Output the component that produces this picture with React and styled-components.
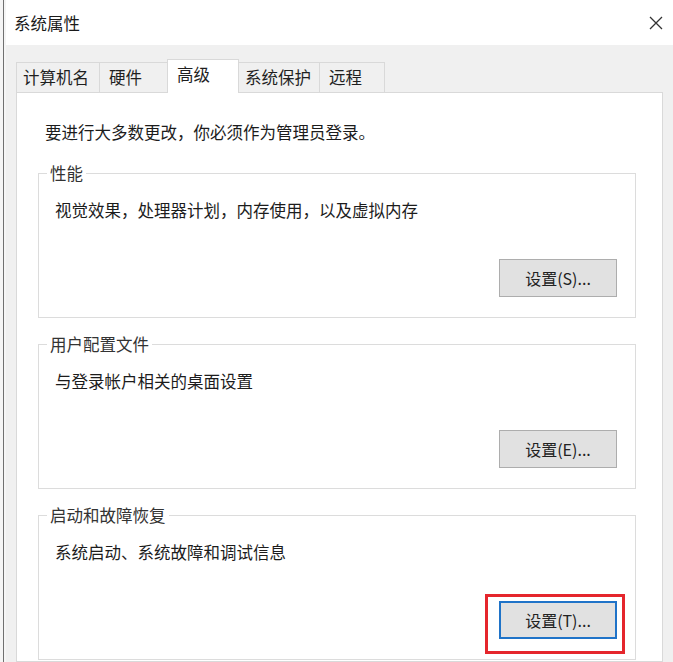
import styled, { createGlobalStyle } from 'styled-components';

const Global = createGlobalStyle`
  html, body { margin: 0; padding: 0; background: #f3f3f3; }
  body { font-family: "Noto Sans CJK SC", "Noto Sans", sans-serif; color: #1c1c1c; }
`;

const Page = styled.div`
  display: flex;
  height: 662px;
  overflow: hidden;
  background: #f5f5f5;
`;

const Edge = styled.div`
  width: 1px;
  margin: 0 2px 0 3px;
  background: #707070;
`;

const Window = styled.div`
  flex: 1;
  display: flex;
  flex-direction: column;
`;

const TitleBar = styled.div`
  height: 45px;
  background: #fff;
  display: flex;
  align-items: center;
  justify-content: space-between;
  padding: 0 9px 0 8px;
`;

const Title = styled.span`
  font-size: 16.5px;
  line-height: 20px;
  color: #1a1a1a;
`;

const Body = styled.div`
  flex: 1;
  background: #f0f0f0;
  padding: 14px 10px 0 10px;
  display: flex;
  flex-direction: column;
`;

const TabRow = styled.div`
  display: flex;
  align-items: flex-end;
  height: 33px;
`;

const Tab = styled.div`
  position: relative;
  width: ${p => p.$w}px;
  height: ${p => (p.$active ? 34 : 30)}px;
  margin-bottom: ${p => (p.$active ? -1 : 0)}px;
  margin-left: -1px;
  z-index: ${p => (p.$active ? 2 : 1)};
  box-sizing: border-box;
  background: ${p => (p.$active ? '#fff' : '#f0f0f0')};
  border: 1px solid #d9d9d9;
  border-bottom: none;
  padding: 2px 0 0 ${p => p.$pad}px;
  font-size: 16.5px;
  line-height: 24px;
  color: #1f1f1f;
  &:first-child { margin-left: 0; }
`;

const Panel = styled.div`
  flex: 1;
  background: #fff;
  border: 1px solid #d9d9d9;
  padding: 27px 26px 0 21px;
  display: flex;
  flex-direction: column;
  gap: 26px;
`;

const Intro = styled.div`
  margin: 0 0 3px 7px;
  font-size: 16.5px;
  line-height: 24px;
`;

const Group = styled.div`
  position: relative;
  height: 145px;
  box-sizing: border-box;
  border: 1px solid #dcdcdc;
  padding: 24px 18px 0 16px;
  display: flex;
  flex-direction: column;
`;

const Legend = styled.span`
  position: absolute;
  top: -13px;
  left: 8px;
  padding: 0 3px;
  background: #fff;
  font-size: 16.5px;
  line-height: 24px;
  color: #333;
`;

const Desc = styled.div`
  font-size: 16.5px;
  line-height: 24px;
`;

const Actions = styled.div`
  margin-top: auto;
  padding-bottom: 20px;
  display: flex;
  justify-content: flex-end;
`;

const Button = styled.button`
  position: relative;
  width: 118px;
  height: 38px;
  box-sizing: border-box;
  background: #e1e1e1;
  border: ${p => (p.$focused ? '2px solid #1f73c8' : '1px solid #adadad')};
  font-family: inherit;
  font-size: 16px;
  color: #222;
  padding: 0;
  ${p => p.$marked && `
    &::after {
      content: '';
      position: absolute;
      top: -9px;
      left: -16px;
      right: -10px;
      bottom: -17px;
      border: 3px solid #e5262c;
    }
  `}
`;

const Close = () => (
  <svg width="16" height="16" viewBox="0 0 16 16">
    <path d="M2 2 L14 14 M14 2 L2 14" stroke="#333" strokeWidth="1.3" fill="none" />
  </svg>
);

const tabs = [
  { label: '计算机名', w: 84, pad: 6 },
  { label: '硬件', w: 69, pad: 9 },
  { label: '高级', w: 72, pad: 9, active: true },
  { label: '系统保护', w: 82, pad: 6 },
  { label: '远程', w: 66, pad: 9 },
];

const groups = [
  { legend: '性能', desc: '视觉效果，处理器计划，内存使用，以及虚拟内存', btn: '设置(S)...' },
  { legend: '用户配置文件', desc: '与登录帐户相关的桌面设置', btn: '设置(E)...' },
  { legend: '启动和故障恢复', desc: '系统启动、系统故障和调试信息', btn: '设置(T)...', marked: true },
];

export default function App() {
  return (
    <>
      <Global />
      <Page>
        <Edge />
        <Window>
          <TitleBar>
            <Title>系统属性</Title>
            <Close />
          </TitleBar>
          <Body>
            <TabRow>
              {tabs.map(t => (
                <Tab key={t.label} $w={t.w} $pad={t.pad} $active={t.active}>{t.label}</Tab>
              ))}
            </TabRow>
            <Panel>
              <Intro>要进行大多数更改，你必须作为管理员登录。</Intro>
              {groups.map(g => (
                <Group key={g.legend}>
                  <Legend>{g.legend}</Legend>
                  <Desc>{g.desc}</Desc>
                  <Actions>
                    <Button $focused={g.marked} $marked={g.marked}>{g.btn}</Button>
                  </Actions>
                </Group>
              ))}
            </Panel>
          </Body>
        </Window>
      </Page>
    </>
  );
}
